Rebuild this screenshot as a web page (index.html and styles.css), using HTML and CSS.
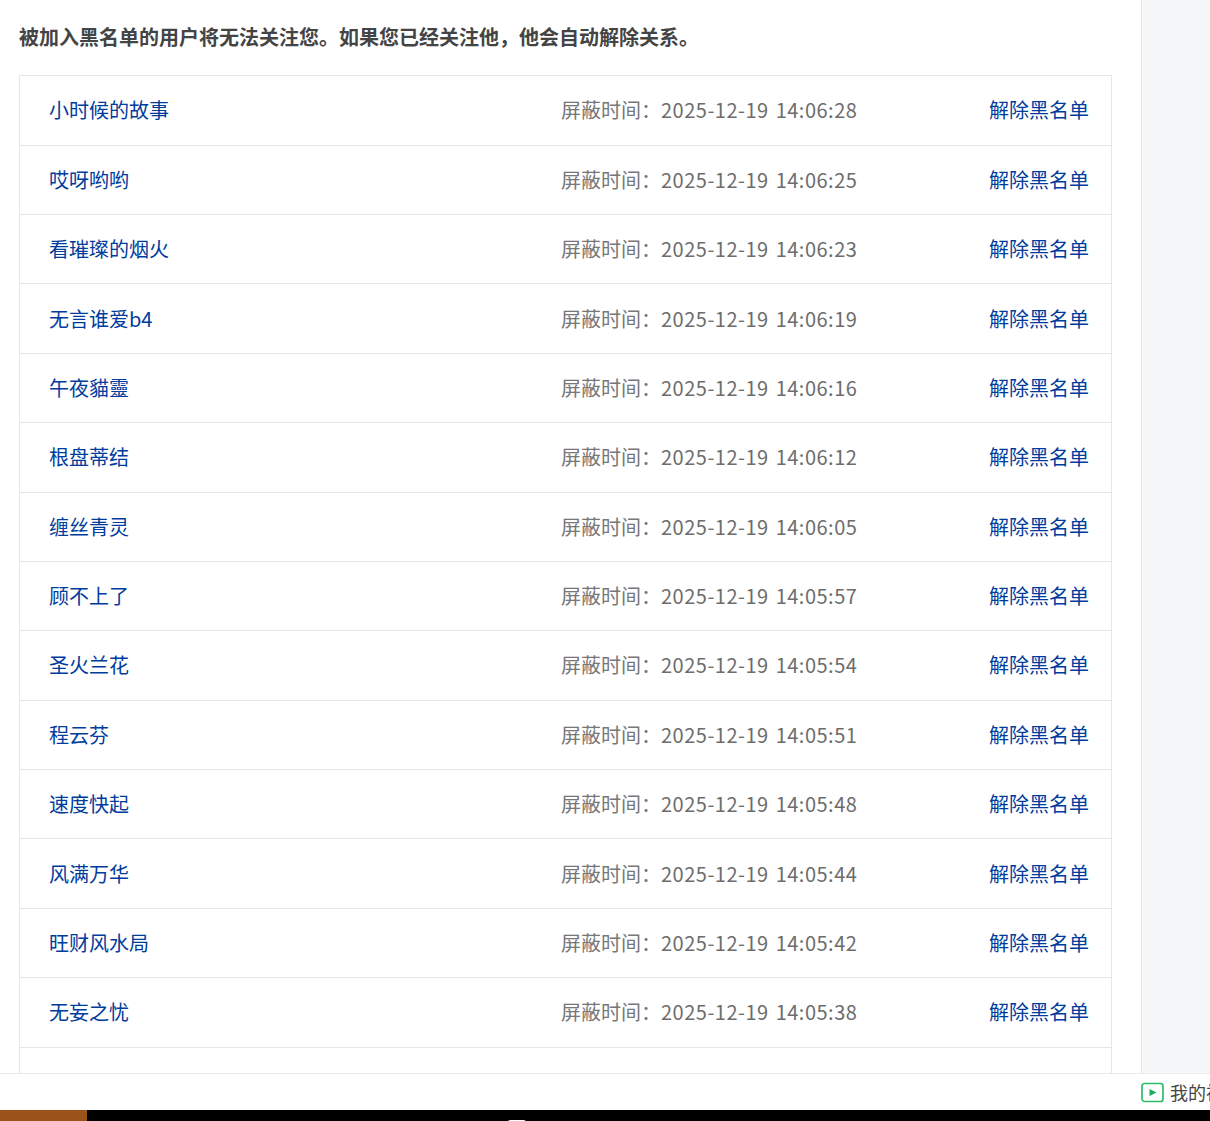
FILE: index.html
```html
<!DOCTYPE html>
<html lang="zh-CN">
<head>
    <meta charset="UTF-8">
    <title>黑名单</title>
    <link rel="stylesheet" href="styles.css">
</head>
<body>
    <div class="page">
        <div class="main">
            <h2 class="tip">被加入黑名单的用户将无法关注您。如果您已经关注他，他会自动解除关系。</h2>
            <ul class="list">
                <li class="row"><a class="name">小时候的故事</a><span class="time">屏蔽时间：<span class="date">2025-12-19 14:06:28</span></span><a class="remove">解除黑名单</a></li>
                <li class="row"><a class="name">哎呀哟哟</a><span class="time">屏蔽时间：<span class="date">2025-12-19 14:06:25</span></span><a class="remove">解除黑名单</a></li>
                <li class="row"><a class="name">看璀璨的烟火</a><span class="time">屏蔽时间：<span class="date">2025-12-19 14:06:23</span></span><a class="remove">解除黑名单</a></li>
                <li class="row"><a class="name">无言谁爱b4</a><span class="time">屏蔽时间：<span class="date">2025-12-19 14:06:19</span></span><a class="remove">解除黑名单</a></li>
                <li class="row"><a class="name">午夜貓靈</a><span class="time">屏蔽时间：<span class="date">2025-12-19 14:06:16</span></span><a class="remove">解除黑名单</a></li>
                <li class="row"><a class="name">根盘蒂结</a><span class="time">屏蔽时间：<span class="date">2025-12-19 14:06:12</span></span><a class="remove">解除黑名单</a></li>
                <li class="row"><a class="name">缠丝青灵</a><span class="time">屏蔽时间：<span class="date">2025-12-19 14:06:05</span></span><a class="remove">解除黑名单</a></li>
                <li class="row"><a class="name">顾不上了</a><span class="time">屏蔽时间：<span class="date">2025-12-19 14:05:57</span></span><a class="remove">解除黑名单</a></li>
                <li class="row"><a class="name">圣火兰花</a><span class="time">屏蔽时间：<span class="date">2025-12-19 14:05:54</span></span><a class="remove">解除黑名单</a></li>
                <li class="row"><a class="name">程云芬</a><span class="time">屏蔽时间：<span class="date">2025-12-19 14:05:51</span></span><a class="remove">解除黑名单</a></li>
                <li class="row"><a class="name">速度快起</a><span class="time">屏蔽时间：<span class="date">2025-12-19 14:05:48</span></span><a class="remove">解除黑名单</a></li>
                <li class="row"><a class="name">风满万华</a><span class="time">屏蔽时间：<span class="date">2025-12-19 14:05:44</span></span><a class="remove">解除黑名单</a></li>
                <li class="row"><a class="name">旺财风水局</a><span class="time">屏蔽时间：<span class="date">2025-12-19 14:05:42</span></span><a class="remove">解除黑名单</a></li>
                <li class="row"><a class="name">无妄之忧</a><span class="time">屏蔽时间：<span class="date">2025-12-19 14:05:38</span></span><a class="remove">解除黑名单</a></li>
                <li class="row"></li>
            </ul>
        </div>
        <div class="side"></div>
    </div>

    <div class="bottom-bar">
        <div class="my-video">
            <svg class="play-icon" width="24" height="21" viewBox="0 0 24 21">
                <rect x="1" y="1.5" width="21" height="18" rx="2.5" fill="none" stroke="#2dbb68" stroke-width="1.7"/>
                <path d="M8.5 7 L15.5 10.5 L8.5 14 Z" fill="#18b058"/>
            </svg>
            <span>我的视频</span>
        </div>
    </div>

    <div class="taskbar">
        <div class="taskbar-accent"></div>
        <div class="taskbar-dot"></div>
    </div>
</body>
</html>
```

FILE: styles.css
```css
* {
    margin: 0;
    padding: 0;
    box-sizing: border-box;
}

html, body {
    height: 100%;
}

body {
    font-family: "Noto Sans CJK SC", "Noto Sans", sans-serif;
    display: flex;
    flex-direction: column;
    background: #fff;
    overflow: hidden;
}

.page {
    display: flex;
    height: 1073px;
    overflow: hidden;
}

.main {
    width: 1142px;
    flex: none;
    padding: 22px 29px 0 19px;
    border-right: 1px solid #e6e6e6;
    overflow: hidden;
}

.side {
    flex: 1;
    background: #f6f7f9;
}

.tip {
    font-size: 20px;
    line-height: 30px;
    font-weight: 700;
    color: #444;
    margin-bottom: 23.25px;
}

.list {
    list-style: none;
    border: 1px solid #e6e6e6;
    border-bottom: none;
}

.row {
    display: flex;
    align-items: center;
    height: 69.39px;
    padding: 0 22px 1px 29px;
    border-bottom: 1px solid #e6e6e6;
    font-size: 20px;
}

.name {
    width: 512px;
    color: #003c9d;
}

.time {
    flex: 1;
    color: #777;
}

.date {
    color: #6d6d6d;
    letter-spacing: 0.5px;
    word-spacing: 2px;
}

.remove {
    color: #003c9d;
}

.bottom-bar {
    display: flex;
    justify-content: flex-start;
    height: 37px;
    padding-left: 1141px;
    background: #fff;
    border-top: 1px solid #eaeaea;
}

.my-video {
    display: flex;
    align-items: center;
    gap: 5px;
    flex: none;
    font-size: 18px;
    color: #444;
    white-space: nowrap;
}

.taskbar {
    position: relative;
    flex: 1;
    background: #000;
}

.taskbar-accent {
    width: 87px;
    height: 100%;
    background: #9a5318;
}

.taskbar-dot {
    position: absolute;
    left: 506px;
    top: 10px;
    width: 22px;
    height: 6px;
    background: #fff;
    border-radius: 5px 5px 0 0;
}
```
